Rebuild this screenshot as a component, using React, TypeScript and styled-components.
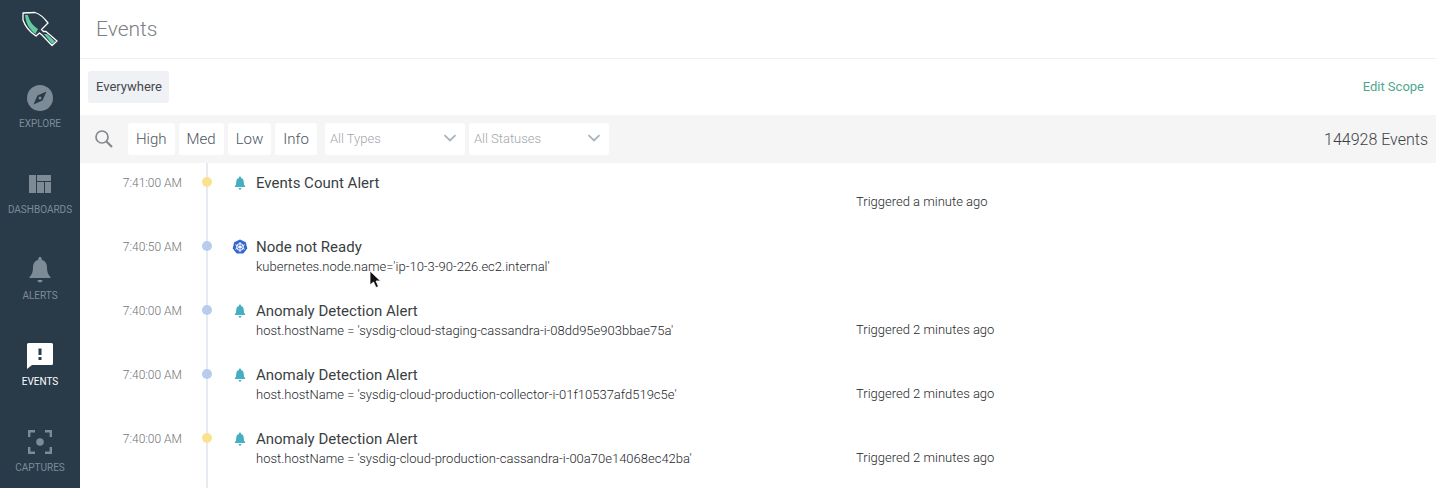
import React from "react";
import styled, { createGlobalStyle } from "styled-components";

const Global = createGlobalStyle`
  html, body { margin: 0; padding: 0; background: #fff; }
  body { font-family: Roboto, "Liberation Sans", sans-serif; overflow: hidden; }
`;

const Page = styled.div`
  position: relative;
  display: flex;
  width: 1436px;
  height: 488px;
  overflow: hidden;
`;

const Sidebar = styled.nav`
  width: 80px;
  flex: none;
  background: #293a49;
  display: flex;
  flex-direction: column;
  align-items: center;
`;

const LogoSlot = styled.div`
  height: 64px;
  flex: none;
  width: 100%;
  display: flex;
  justify-content: center;
  padding-top: 10px;
  box-sizing: border-box;
`;

const NavItem = styled.div<{ $active?: boolean }>`
  height: 86px;
  flex: none;
  width: 100%;
  display: flex;
  flex-direction: column;
  align-items: center;
  padding-top: 19px;
  box-sizing: border-box;
  color: ${(p) => (p.$active ? "#ffffff" : "#7d8b97")};
`;

const NavIcon = styled.div`
  height: 30px;
  display: flex;
  align-items: center;
  justify-content: center;
`;

const NavLabel = styled.span`
  margin-top: 4px;
  font-size: 10px;
  line-height: 14px;
  color: inherit;
`;

const Main = styled.main`
  flex: 1;
  display: flex;
  flex-direction: column;
  min-width: 0;
`;

const Header = styled.header`
  height: 58px;
  flex: none;
  border-bottom: 1px solid #eeeff1;
  display: flex;
  align-items: center;
  padding-left: 16px;
`;

const Title = styled.h1`
  margin: 0;
  font-size: 21px;
  font-weight: 300;
  color: #7c8186;
`;

const ScopeRow = styled.div`
  height: 56px;
  flex: none;
  display: flex;
  align-items: center;
  justify-content: space-between;
  padding: 0 12px 0 8px;
`;

const ScopeChip = styled.div`
  width: 81px;
  height: 32px;
  padding: 0 0 2px 8px;
  box-sizing: border-box;
  display: flex;
  align-items: center;
  background: #eff1f5;
  border-radius: 3px;
  font-size: 13px;
  color: #44494e;
`;

const EditLink = styled.a`
  padding-bottom: 2px;
  font-size: 13px;
  color: #4fa78f;
`;

const FilterBar = styled.div`
  height: 48px;
  flex: none;
  background: #f5f5f6;
  display: flex;
  align-items: center;
  padding: 0 8px 0 14px;
`;

const SearchSlot = styled.div`
  width: 34px;
  display: flex;
  color: #85898d;
`;

const Pill = styled.div`
  height: 32px;
  padding: 0 8px;
  margin-right: 4px;
  display: flex;
  align-items: center;
  background: #fff;
  border-radius: 3px;
  font-size: 15px;
  font-weight: 300;
  color: #4b5561;
`;

const Selects = styled.div`
  display: flex;
  gap: 4px;
  margin-left: 4px;
`;

const Select = styled.div`
  width: 140px;
  height: 32px;
  padding: 0 8px 2px 5px;
  box-sizing: border-box;
  display: flex;
  align-items: center;
  justify-content: space-between;
  background: #fff;
  border-radius: 3px;
  font-size: 13px;
  font-weight: 300;
  color: #a2a6ab;
`;

const Count = styled.div`
  margin-left: auto;
  font-size: 16px;
  font-weight: 300;
  color: #3d4145;
`;

const List = styled.div`
  display: flex;
  flex-direction: column;
`;

const Row = styled.div`
  height: 64px;
  flex: none;
  display: grid;
  grid-template-columns: 102px 50px 24px 600px 1fr;
`;

const Time = styled.div`
  padding-top: 11px;
  font-size: 12px;
  line-height: 18px;
  font-weight: 300;
  color: #6f7478;
  text-align: right;
`;

const Node = styled.div`
  position: relative;
  display: flex;
  justify-content: center;
  padding-top: 14px;
  &::before {
    content: "";
    position: absolute;
    left: 24px;
    top: 0;
    bottom: 0;
    width: 2px;
    background: #e6ebf1;
  }
`;

const Dot = styled.span<{ $color: string }>`
  position: relative;
  width: 10px;
  height: 10px;
  border-radius: 50%;
  background: ${(p) => p.$color};
`;

const IconCell = styled.div`
  padding-top: 12px;
`;

const Body = styled.div`
  padding-top: 10px;
`;

const EventTitle = styled.div`
  height: 20px;
  font-size: 15px;
  line-height: 20px;
  color: #3a3f43;
`;

const EventSub = styled.div`
  height: 18px;
  margin-top: 1px;
  font-size: 13px;
  line-height: 18px;
  font-weight: 300;
  color: #24282b;
`;

const Triggered = styled.div`
  padding-top: 30px;
  font-size: 13px;
  line-height: 18px;
  font-weight: 300;
  color: #24282b;
`;

const Cursor = styled.svg`
  position: absolute;
  left: 369px;
  top: 270px;
`;

const Bell = () => (
  <svg width="16" height="16" viewBox="0 0 16 16">
    <path d="M8 1.500c.6 0 1 .4 1 1v.5c2 .5 2.800 2.200 2.800 4.200 0 2 .5 3.200 1.500 4.300v.5H2.700v-.5c1-1.100 1.500-2.300 1.500-4.300C4.200 5.200 5 3.500 7 3v-.5c0-.6.4-1 1-1z" fill="#49adc0" />
    <path d="M6.500 13h3c0 .9-.6 1.500-1.500 1.500S6.500 13.900 6.500 13z" fill="#49adc0" />
  </svg>
);

const Kube = () => (
  <svg width="16" height="16" viewBox="0 0 16 16">
    <path d="M8 .5l5.800 2.800 1.500 6.300-4 5H4.700l-4-5 1.500-6.300z" fill="#3566cf" />
    <circle cx="8" cy="8" r="3.400" fill="none" stroke="#fff" strokeWidth="1" />
    <path d="M8 3v10M3.400 5.800l9.200 4.400M12.600 5.800l-9.200 4.400" stroke="#fff" strokeWidth=".9" />
    <circle cx="8" cy="8" r="1" fill="#fff" />
  </svg>
);

const Chevron = () => (
  <svg width="14" height="8" viewBox="0 0 14 8">
    <path d="M1.500 1.200L7 6.500l5.500-5.300" fill="none" stroke="#a9b3bd" strokeWidth="1.800" />
  </svg>
);

const events = [
  { time: "7:41:00 AM", dot: "#fbe28f", icon: "bell", title: "Events Count Alert", sub: "", trig: "Triggered a minute ago" },
  { time: "7:40:50 AM", dot: "#b6cdee", icon: "kube", title: "Node not Ready", sub: "kubernetes.node.name='ip-10-3-90-226.ec2.internal'", trig: "" },
  { time: "7:40:00 AM", dot: "#b6cdee", icon: "bell", title: "Anomaly Detection Alert", sub: "host.hostName = 'sysdig-cloud-staging-cassandra-i-08dd95e903bbae75a'", trig: "Triggered 2 minutes ago" },
  { time: "7:40:00 AM", dot: "#b6cdee", icon: "bell", title: "Anomaly Detection Alert", sub: "host.hostName = 'sysdig-cloud-production-collector-i-01f10537afd519c5e'", trig: "Triggered 2 minutes ago" },
  { time: "7:40:00 AM", dot: "#fbe28f", icon: "bell", title: "Anomaly Detection Alert", sub: "host.hostName = 'sysdig-cloud-production-cassandra-i-00a70e14068ec42ba'", trig: "Triggered 2 minutes ago" },
];

export default function App() {
  return (
    <Page>
      <Global />
      <Sidebar>
        <LogoSlot>
          <svg width="38" height="38" viewBox="0 0 38 38">
            <path d="M2 3L14 2.500C19 4 24 9 27 13L20.500 19.500 22.500 21.500 25 21.500 36 31 31 35.500 21 25 18.500 23 15 26C9 22 4 16 2 10z" fill="#293a49" stroke="#fff" strokeWidth="1.300" strokeLinejoin="round" />
            <path d="M4 5L7 5C8 10 11 15 17 19L14.500 24C9 20 5 14 4 5z" fill="#62c9a0" />
            <path d="M23 24L26 24 34 31.500 31 34z" fill="#62c9a0" />
          </svg>
        </LogoSlot>
        <NavItem>
          <NavIcon>
            <svg width="26" height="26" viewBox="0 0 26 26">
              <circle cx="13" cy="13" r="13" fill="#7d8b97" />
              <path d="M19.500 6.500L15.500 15.500 6.500 19.500 10.500 10.500z" fill="#293a49" />
              <circle cx="13" cy="13" r="1.500" fill="#7d8b97" />
            </svg>
          </NavIcon>
          <NavLabel>EXPLORE</NavLabel>
        </NavItem>
        <NavItem>
          <NavIcon>
            <svg width="22" height="18" viewBox="0 0 22 18" fill="#7d8b97">
              <rect x="0" y="0" width="7" height="18" />
              <rect x="8" y="0" width="14" height="6" />
              <rect x="8" y="7" width="7" height="11" />
              <rect x="16" y="7" width="6" height="11" />
            </svg>
          </NavIcon>
          <NavLabel>DASHBOARDS</NavLabel>
        </NavItem>
        <NavItem>
          <NavIcon>
            <svg width="22" height="26" viewBox="0 0 22 26" fill="#7d8b97">
              <path d="M11 0c1 0 1.700.7 1.700 1.700v1C16.500 3.700 18 7 18 10.500c0 4 .8 7 3.500 9.500v1H.5v-1C3.200 17.500 4 14.500 4 10.500 4 7 5.500 3.700 9.300 2.700v-1C9.300.7 10 0 11 0z" />
              <path d="M8.500 23h5c0 1.500-1 2.500-2.500 2.500S8.500 24.500 8.500 23z" />
            </svg>
          </NavIcon>
          <NavLabel>ALERTS</NavLabel>
        </NavItem>
        <NavItem $active>
          <NavIcon>
            <svg width="26" height="26" viewBox="0 0 26 26">
              <path d="M1.500 0h23A1.500 1.500 0 0 1 26 1.500v19a1.500 1.500 0 0 1-1.500 1.500H5l-5 4V1.500A1.500 1.500 0 0 1 1.500 0z" fill="#fff" />
              <rect x="11.500" y="5.500" width="3" height="6.500" fill="#293a49" />
              <rect x="11.500" y="14" width="3" height="3" fill="#293a49" />
            </svg>
          </NavIcon>
          <NavLabel>EVENTS</NavLabel>
        </NavItem>
        <NavItem>
          <NavIcon>
            <svg width="24" height="24" viewBox="0 0 24 24" fill="none" stroke="#7d8b97" strokeWidth="2.400">
              <path d="M1.200 7V1.200H7M17 1.200h5.800V7M22.800 17v5.800H17M7 22.800H1.200V17" />
              <circle cx="12" cy="12" r="3.800" fill="#7d8b97" stroke="none" />
            </svg>
          </NavIcon>
          <NavLabel>CAPTURES</NavLabel>
        </NavItem>
      </Sidebar>
      <Main>
        <Header>
          <Title>Events</Title>
        </Header>
        <ScopeRow>
          <ScopeChip>Everywhere</ScopeChip>
          <EditLink>Edit Scope</EditLink>
        </ScopeRow>
        <FilterBar>
          <SearchSlot>
            <svg width="20" height="20" viewBox="0 0 20 20" fill="none" stroke="currentColor">
              <circle cx="8" cy="8" r="6" strokeWidth="1.700" />
              <path d="M12.500 12.500L18 18" strokeWidth="2.200" />
            </svg>
          </SearchSlot>
          <Pill>High</Pill>
          <Pill>Med</Pill>
          <Pill>Low</Pill>
          <Pill>Info</Pill>
          <Selects>
            <Select>All Types<Chevron /></Select>
            <Select>All Statuses<Chevron /></Select>
          </Selects>
          <Count>144928 Events</Count>
        </FilterBar>
        <List>
          {events.map((e, i) => (
            <Row key={i}>
              <Time>{e.time}</Time>
              <Node><Dot $color={e.dot} /></Node>
              <IconCell>{e.icon === "bell" ? <Bell /> : <Kube />}</IconCell>
              <Body>
                <EventTitle>{e.title}</EventTitle>
                <EventSub>{e.sub}</EventSub>
              </Body>
              <Triggered>{e.trig}</Triggered>
            </Row>
          ))}
          <Row>
            <span />
            <Node />
          </Row>
        </List>
      </Main>
      <Cursor width="14" height="20" viewBox="0 0 14 20">
        <path d="M1 1v14l3.500-3 2.500 5.500 2.500-1L7 11h4.500z" fill="#111" stroke="#fff" strokeWidth=".8" />
      </Cursor>
    </Page>
  );
}
